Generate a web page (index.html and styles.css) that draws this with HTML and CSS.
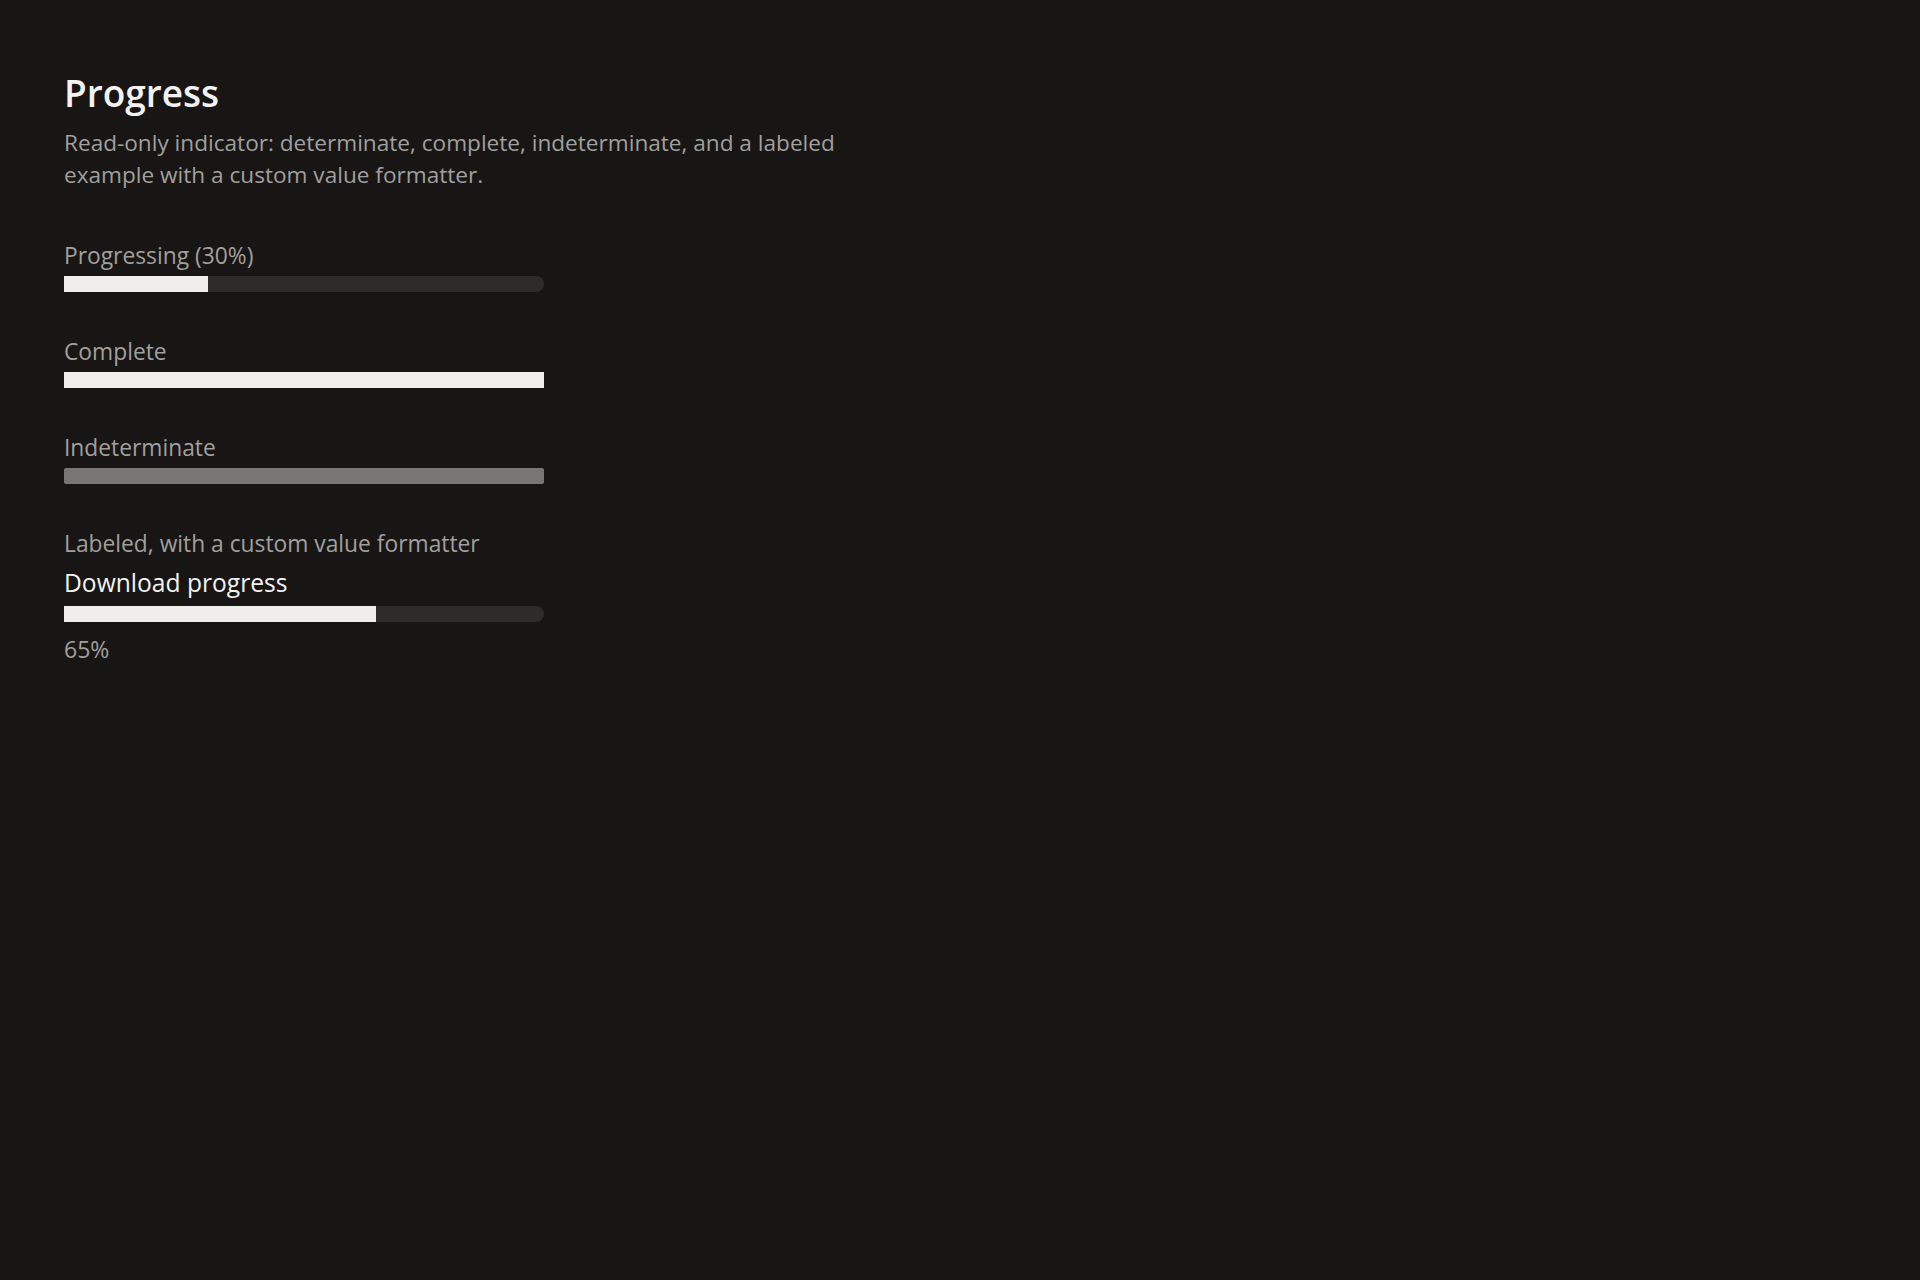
FILE: index.html
```html
<!DOCTYPE html>
<html lang="en">

<head>
  <meta charset="UTF-8">
  <meta name="viewport" content="width=device-width, initial-scale=1.0">
  <title>Progress</title>
  <link rel="stylesheet" href="styles.css">
</head>

<body>
  <main class="page">
    <h1 class="page-title">Progress</h1>
    <p class="page-desc">Read-only indicator: determinate, complete, indeterminate, and a labeled example with a custom value formatter.</p>

    <div class="demos">
      <!-- Determinate -->
      <section class="demo">
        <div class="demo-label">Progressing (30%)</div>
        <div class="progress" role="progressbar" aria-valuenow="30" aria-valuemin="0" aria-valuemax="100">
          <div class="progress-fill" style="width: 30%;"></div>
        </div>
      </section>

      <!-- Complete -->
      <section class="demo">
        <div class="demo-label">Complete</div>
        <div class="progress" role="progressbar" aria-valuenow="100" aria-valuemin="0" aria-valuemax="100">
          <div class="progress-fill" style="width: 100%;"></div>
        </div>
      </section>

      <!-- Indeterminate: no value -->
      <section class="demo">
        <div class="demo-label">Indeterminate</div>
        <div class="progress progress-indeterminate" role="progressbar"></div>
      </section>

      <!-- Labeled, value shown with a formatter -->
      <section class="demo">
        <div class="demo-label">Labeled, with a custom value formatter</div>
        <div class="labeled">
          <div class="progress-title" id="dlLabel">Download progress</div>
          <div class="progress" role="progressbar" aria-labelledby="dlLabel" aria-valuenow="65" aria-valuemin="0" aria-valuemax="100">
            <div class="progress-fill" style="width: 65%;"></div>
          </div>
          <div class="progress-value">65%</div>
        </div>
      </section>
    </div>
  </main>
</body>

</html>
```

FILE: styles.css
```css
/* Base */
html,
body {
  margin: 0;
  padding: 0;
  background: #171615;
  min-height: 100%;
}

body {
  font-family: "Open Sans", "Noto Sans", sans-serif;
  color: #f3f2f1;
}

.page {
  padding: 70px 64px 68px;
  max-width: 840px;
}

.page-title {
  margin: 0;
  font-size: 37px;
  line-height: 46px;
  font-weight: 600;
  color: #f3f2f1;
}

.page-desc {
  margin: 11px 0 0;
  font-size: 22.6px;
  line-height: 32px;
  color: #a19f9d;
}

/* Demo list */
.demos {
  display: flex;
  flex-direction: column;
  gap: 42px;
  margin-top: 47px;
}

.demo {
  display: flex;
  flex-direction: column;
  gap: 4px;
}

.demo-label {
  padding-top: 2px;
  font-size: 22.8px;
  line-height: 32px;
  color: #a19f9d;
}

/* Progress bar */
.progress {
  width: 480px;
  height: 16px;
  background: #2d2c2a;
  border-radius: 8px;
}

.progress-fill {
  height: 100%;
  background: #efeeec;
}

.progress-indeterminate {
  background: #797775;
  border-radius: 2px;
}

/* Labeled variant */
.labeled {
  display: flex;
  flex-direction: column;
  gap: 7px;
  margin-top: 2px;
}

.progress-title {
  padding-top: 1px;
  font-size: 24.6px;
  line-height: 32px;
  color: #f3f2f1;
}

.progress-value {
  margin-top: 3px;
  padding-top: 1px;
  font-size: 23px;
  line-height: 32px;
  color: #a19f9d;
}
```
